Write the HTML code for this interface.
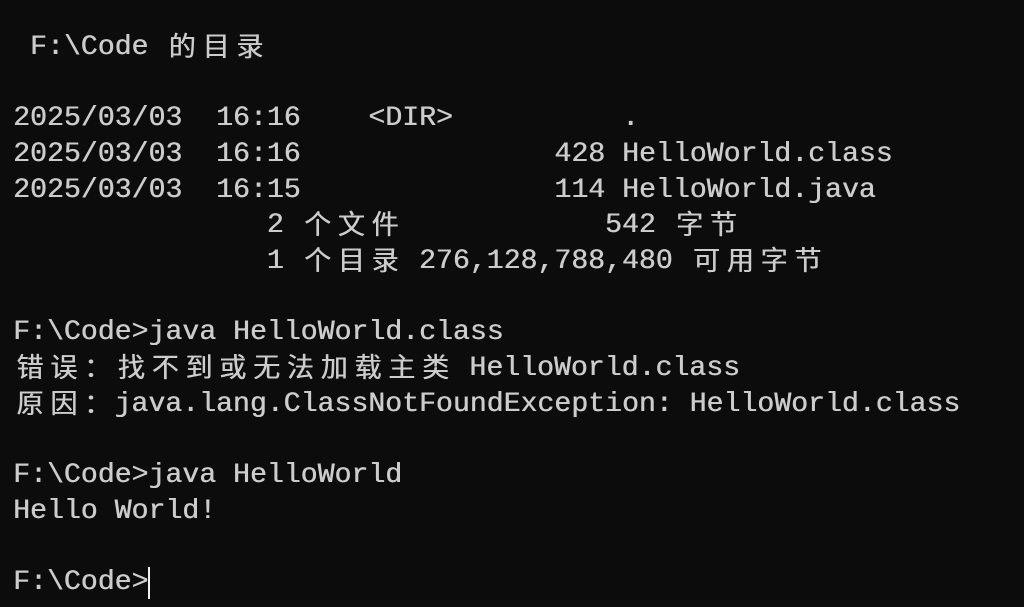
<!DOCTYPE html>
<html><head><meta charset="utf-8"><style>
html,body{margin:0;padding:0;background:#0c0c0c;width:1024px;height:607px;overflow:hidden}
pre{margin:0;padding:30px 0 0 13px;font-family:"Liberation Mono","Noto Sans CJK SC",monospace;font-size:28.2px;line-height:35.67px;color:#cccccc;white-space:pre;font-weight:normal;letter-spacing:0;text-shadow:0.5px 0 0 #cccccc}
.w{display:inline-block;width:33.8px;text-align:center;font-family:"Noto Sans CJK SC",sans-serif;font-weight:normal;font-size:27px;line-height:35.67px;vertical-align:bottom;position:relative;top:-3px}
.cur{display:inline-block;width:2px;height:32px;background:#f0f0f0;vertical-align:top;margin-top:2px;text-shadow:none}
</style></head><body><pre> F:\Code <span class="w">的</span><span class="w">目</span><span class="w">录</span>

2025/03/03  16:16    &lt;DIR&gt;          .
2025/03/03  16:16               428 HelloWorld.class
2025/03/03  16:15               114 HelloWorld.java
               2 <span class="w">个</span><span class="w">文</span><span class="w">件</span>            542 <span class="w">字</span><span class="w">节</span>
               1 <span class="w">个</span><span class="w">目</span><span class="w">录</span> 276,128,788,480 <span class="w">可</span><span class="w">用</span><span class="w">字</span><span class="w">节</span>

F:\Code&gt;java HelloWorld.class
<span class="w">错</span><span class="w">误</span><span class="w">：</span><span class="w">找</span><span class="w">不</span><span class="w">到</span><span class="w">或</span><span class="w">无</span><span class="w">法</span><span class="w">加</span><span class="w">载</span><span class="w">主</span><span class="w">类</span> HelloWorld.class
<span class="w">原</span><span class="w">因</span><span class="w">：</span>java.lang.ClassNotFoundException: HelloWorld.class

F:\Code&gt;java HelloWorld
Hello World!

F:\Code&gt;<span class="cur"></span></pre></body></html>
